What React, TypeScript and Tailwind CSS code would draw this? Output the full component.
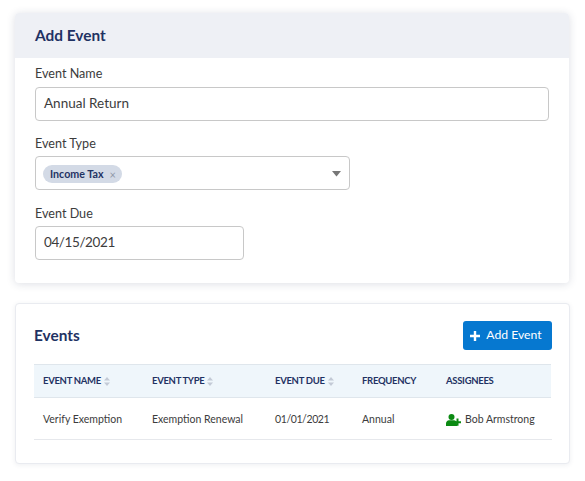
import type { ReactNode } from "react";

function SortIcon() {
  return (
    <svg width="6" height="9" viewBox="0 0 6 9" className="inline-block ml-[3px] mb-[1px]" fill="#c3cad6">
      <path d="M3 0 L6 3.6 H0 Z" />
      <path d="M3 9 L6 5.4 H0 Z" />
    </svg>
  );
}

function AssignIcon() {
  return (
    <svg width="15" height="12" viewBox="0 0 15 12" fill="#0b8a12" className="shrink-0">
      <circle cx="5.5" cy="3" r="3" />
      <path d="M0 12 V9.4 C0 7.6 1.4 6.2 3 6.2 H8 C9.6 6.2 11 7.6 11 9.4 V12 Z" />
      <path d="M10.5 4.6 H12.5 V7.2 H15 V9.2 H12.5 V11.8 H10.5 V9.2 H8 V7.2 H10.5 Z" />
    </svg>
  );
}

function Label({ children, gap }: { children: ReactNode; gap: string }) {
  return <label className={`block text-[12.6px] leading-[18px] text-[#3c3c3c] ${gap}`}>{children}</label>;
}

const headers = [
  { name: "EVENT NAME", sort: true, width: "w-[109px]" },
  { name: "EVENT TYPE", sort: true, width: "w-[123px]" },
  { name: "EVENT DUE", sort: true, width: "w-[87px]" },
  { name: "FREQUENCY", sort: false, width: "w-[84px]" },
  { name: "ASSIGNEES", sort: false, width: "flex-1" },
];

export default function App() {
  return (
    <div className="w-[585px] h-[481px] bg-white px-[15px] pt-[13px] font-['Lato','Noto_Sans',sans-serif] overflow-hidden">
      <div className="w-[554px] h-[270px] rounded-[4px] bg-white shadow-[0_1px_8px_rgba(40,50,90,0.16)]">
        <div className="h-[45px] bg-[#eef0f5] rounded-t-[4px] pl-[20px] flex items-center">
          <h2 className="text-[15.4px] font-bold text-[#1f3263]">Add Event</h2>
        </div>
        <div className="pl-[20px] pt-[7px]">
          <Label gap="mb-[4px]">Event Name</Label>
          <div className="w-[514px] h-[34px] border border-[#c8c8c8] rounded-[4px] flex items-center pl-[8px] pb-[2px] text-[13.5px] text-[#3c3c3c]">
            Annual Return
          </div>
          <div className="mt-[14px]">
            <Label gap="mb-[3px]">Event Type</Label>
            <div className="w-[315px] h-[34px] border border-[#c8c8c8] rounded-[4px] flex items-center justify-between pl-[7px] pr-[8px] pt-[2px]">
              <span className="h-[18px] pl-[7px] pr-[6px] rounded-full bg-[#d3dae6] flex items-center gap-[6px] text-[10.7px] font-bold text-[#1f3263]">
                Income Tax
                <span className="text-[11px] font-normal text-[#8f98a8] leading-none">×</span>
              </span>
              <svg width="9" height="6" viewBox="0 0 9 6" fill="#777">
                <path d="M0 0 H9 L4.5 5.5 Z" />
              </svg>
            </div>
          </div>
          <div className="mt-[15px]">
            <Label gap="mb-[3px]">Event Due</Label>
            <div className="w-[209px] h-[34px] border border-[#c8c8c8] rounded-[4px] flex items-center pl-[8px] pb-[2px] text-[13.5px] tracking-[-0.4px] text-[#3c3c3c]">
              04/15/2021
            </div>
          </div>
        </div>
      </div>

      <div className="w-[555px] h-[161px] mt-[20px] rounded-[4px] border border-[#e9ebf0] bg-white shadow-[0_1px_5px_rgba(40,50,90,0.08)] pl-[18px] pr-[17px] pt-[17px]">
        <div className="flex items-center justify-between h-[29px]">
          <h2 className="text-[15.4px] font-bold text-[#1f3263] pt-[1px]">Events</h2>
          <button className="w-[89px] h-[29px] bg-[#0678d0] rounded-[3px] text-white text-[12.2px] flex items-center justify-center gap-[6px] pr-[3px]">
            <svg width="10" height="10" viewBox="0 0 10 10" fill="white">
              <path d="M3.8 0 H6.2 V3.8 H10 V6.2 H6.2 V10 H3.8 V6.2 H0 V3.8 H3.8 Z" />
            </svg>
            Add Event
          </button>
        </div>
        <div className="mt-[14px] w-[518px]">
          <div className="w-[517px] h-[34px] bg-[#eff6fb] border-y border-[#dfe6ec] flex items-center pl-[9px] pt-[1px]">
            {headers.map((h) => (
              <div key={h.name} className={`${h.width} text-[9.5px] tracking-[-0.3px] font-bold text-[#1f3263] whitespace-nowrap`}>
                {h.name}
                {h.sort && <SortIcon />}
              </div>
            ))}
          </div>
          <div className="h-[42px] border-b border-[#e6e8ec] flex items-center pl-[9px] pt-[2px] text-[10.5px] text-[#3c3c3c]">
            <div className="w-[109px]">Verify Exemption</div>
            <div className="w-[123px]">Exemption Renewal</div>
            <div className="w-[87px] tracking-[-0.4px]">01/01/2021</div>
            <div className="w-[84px]">Annual</div>
            <div className="flex-1 flex items-center gap-[4px]">
              <AssignIcon />
              Bob Armstrong
            </div>
          </div>
        </div>
      </div>
    </div>
  );
}
